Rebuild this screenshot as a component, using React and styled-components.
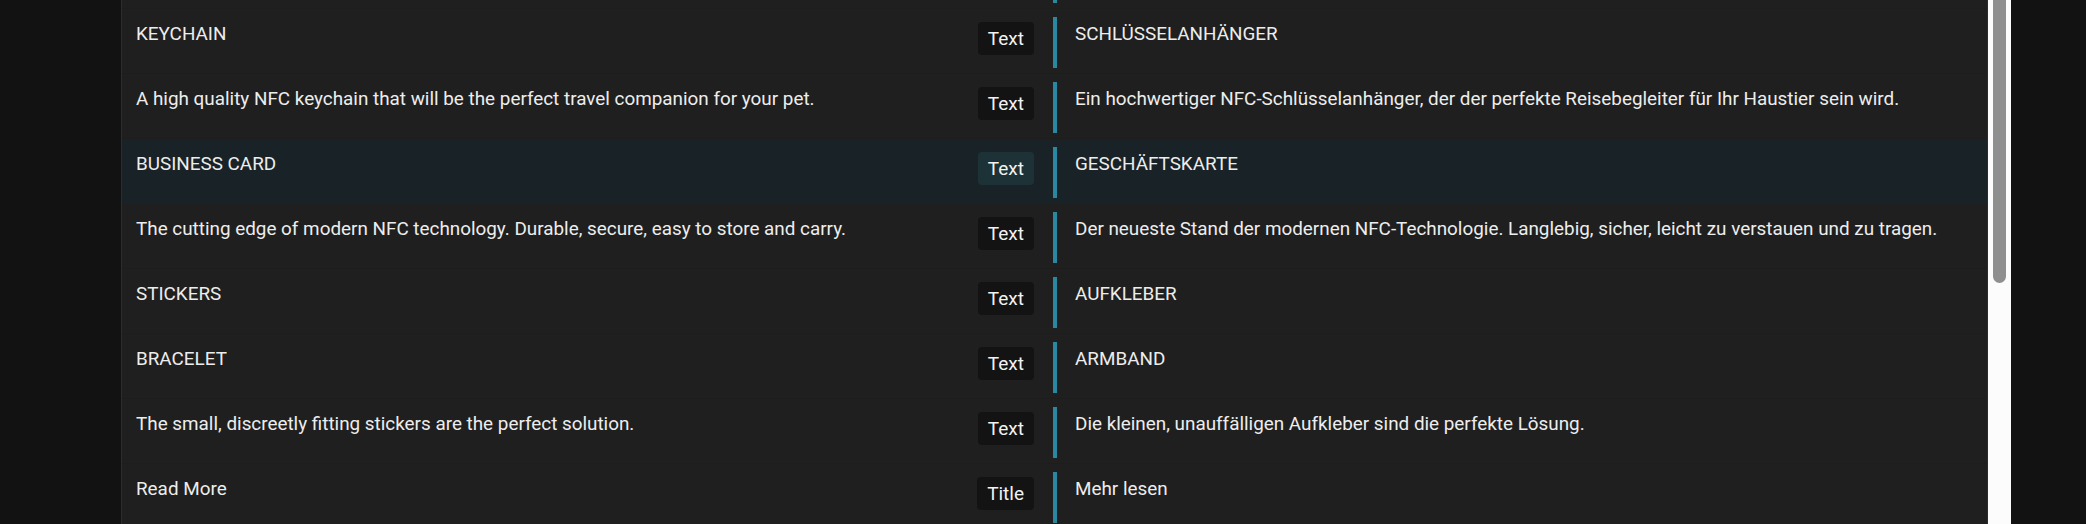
import React from "react";
import styled, { createGlobalStyle } from "styled-components";

const Global = createGlobalStyle`
  html, body { margin: 0; padding: 0; height: 100%; overflow: hidden; background: #121212; }
  #root { height: 100%; }
  * { box-sizing: border-box; }
`;

const Page = styled.div`
  display: flex;
  height: 524px;
  overflow: hidden;
  background: #121212;
  font-family: Roboto, "Noto Sans", sans-serif;
  color: #ededed;
`;

const Gutter = styled.div`
  flex: 0 0 ${(p) => p.$w}px;
  background: #121212;
`;

const Panel = styled.div`
  flex: 1 1 auto;
  min-width: 0;
  background: #1f1f1f;
  border-left: 1px solid #2c2c2c;
  border-right: 1px solid #2c2c2c;
  overflow: hidden;
`;

const List = styled.div`
  display: flex;
  flex-direction: column;
  margin-top: -56px;
`;

const Row = styled.div`
  display: grid;
  grid-template-columns: 931px 1fr;
  height: 65px;
  flex: 0 0 65px;
  background: ${(p) => (p.$active ? "#192226" : "#1f1f1f")};
  box-shadow: inset 0 -1px 0 ${(p) => (p.$active ? "#192226" : "#1d1d1d")};
`;

const Source = styled.div`
  display: flex;
  align-items: flex-start;
  justify-content: space-between;
  padding: 0 19px 0 14px;
  min-width: 0;
`;

const Label = styled.div`
  font-size: 18.87px;
  line-height: 22px;
  padding-top: 14px;
  white-space: nowrap;
  overflow: hidden;
`;

const Badge = styled.span`
  flex: 0 0 auto;
  margin-top: 13px;
  height: 33px;
  line-height: 33px;
  padding: 0 10px;
  border-radius: 4px;
  font-size: 19px;
  color: #f2f2f2;
  background: ${(p) => (p.$active ? "#1d3237" : "#131313")};
`;

const Target = styled.div`
  margin-top: 8px;
  height: 51px;
  border-left: 4px solid #2b88a3;
  padding-left: 18px;
  min-width: 0;
`;

const TargetText = styled.div`
  font-size: 18.87px;
  line-height: 22px;
  padding-top: 6px;
  white-space: nowrap;
  overflow: hidden;
`;

const Track = styled.div`
  flex: 0 0 23px;
  background: #fcfcfc;
  display: flex;
  justify-content: center;
`;

const Thumb = styled.div`
  width: 13px;
  height: 283px;
  background: #8f8f8f;
  border-radius: 0 0 7px 7px;
`;

const rows = [
  { en: "NFC TAG", de: "NFC-TAG", type: "Text" },
  { en: "KEYCHAIN", de: "SCHLÜSSELANHÄNGER", type: "Text" },
  {
    en: "A high quality NFC keychain that will be the perfect travel companion for your pet.",
    de: "Ein hochwertiger NFC-Schlüsselanhänger, der der perfekte Reisebegleiter für Ihr Haustier sein wird.",
    type: "Text",
  },
  { en: "BUSINESS CARD", de: "GESCHÄFTSKARTE", type: "Text", active: true },
  {
    en: "The cutting edge of modern NFC technology. Durable, secure, easy to store and carry.",
    de: "Der neueste Stand der modernen NFC-Technologie. Langlebig, sicher, leicht zu verstauen und zu tragen.",
    type: "Text",
  },
  { en: "STICKERS", de: "AUFKLEBER", type: "Text" },
  { en: "BRACELET", de: "ARMBAND", type: "Text" },
  {
    en: "The small, discreetly fitting stickers are the perfect solution.",
    de: "Die kleinen, unauffälligen Aufkleber sind die perfekte Lösung.",
    type: "Text",
  },
  { en: "Read More", de: "Mehr lesen", type: "Title" },
];

export default function App() {
  return (
    <>
      <Global />
      <Page>
        <Gutter $w={121} />
        <Panel>
          <List>
            {rows.map((r, i) => (
              <Row key={i} $active={r.active}>
                <Source>
                  <Label>{r.en}</Label>
                  <Badge $active={r.active}>{r.type}</Badge>
                </Source>
                <Target>
                  <TargetText>{r.de}</TargetText>
                </Target>
              </Row>
            ))}
          </List>
        </Panel>
        <Track>
          <Thumb />
        </Track>
        <Gutter $w={75} />
      </Page>
    </>
  );
}
